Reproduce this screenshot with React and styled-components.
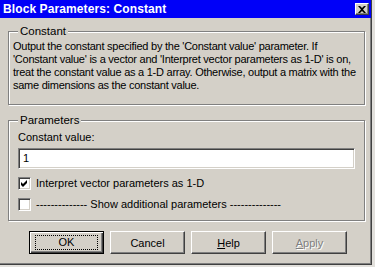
import React from "react";
import styled, { createGlobalStyle } from "styled-components";

const Global = createGlobalStyle`
  html, body {
    margin: 0;
    padding: 0;
    background: #e2e0dc;
  }
  body {
    font-family: "Liberation Sans", Arial, sans-serif;
    font-size: 11px;
    color: #000;
  }
`;

const Window = styled.div`
  width: 372px;
  height: 265px;
  box-sizing: border-box;
  background: #d4d0c8;
  border-right: 1px solid #404040;
  border-bottom: 1px solid #404040;
  box-shadow: inset -1px -1px 0 #808080;
  display: flex;
  flex-direction: column;
`;

const TitleBar = styled.div`
  height: 18px;
  background: #0000f8;
  display: flex;
  align-items: center;
  justify-content: space-between;
  padding: 0 2px 0 3px;
  box-sizing: border-box;
`;

const Title = styled.span`
  color: #fff;
  font-weight: bold;
  font-size: 12px;
  letter-spacing: 0.1px;
`;

const CloseButton = styled.div`
  width: 14px;
  height: 12px;
  box-sizing: border-box;
  background: #d4d0c8;
  border-top: 1px solid #fff;
  border-left: 1px solid #fff;
  border-right: 1px solid #404040;
  border-bottom: 1px solid #404040;
  box-shadow: inset -1px -1px 0 #808080;
  display: flex;
  align-items: center;
  justify-content: center;
`;

const Body = styled.div`
  padding: 7px 6px 0 8px;
  display: flex;
  flex-direction: column;
  gap: 9px;
`;

const Group = styled.fieldset`
  margin: 0;
  height: ${(p) => p.$h}px;
  box-sizing: border-box;
  border: 1px solid #808080;
  box-shadow: inset 1px 1px 0 #fff, 1px 1px 0 #fff;
  padding: 0 6px 0 4px;
  width: 357px;
`;

const Legend = styled.legend`
  padding: 0 2px;
  margin-left: 5px;
  background: #d4d0c8;
  line-height: 13px;
  font-size: 11.5px;
`;

const Description = styled.p`
  margin: 2px 0 0 0;
  line-height: 13px;
  letter-spacing: -0.25px;
`;

const Label = styled.div`
  margin: 4px 0 0 5px;
  line-height: 13px;
`;

const TextField = styled.div`
  margin: 4px 0 0 5px;
  width: 337px;
  height: 21px;
  box-sizing: border-box;
  background: #fff;
  border-top: 1px solid #808080;
  border-left: 1px solid #808080;
  border-right: 1px solid #fff;
  border-bottom: 1px solid #fff;
  box-shadow: inset 1px 1px 0 #404040, inset -1px -1px 0 #d4d0c8;
  padding: 3px 0 0 4px;
  line-height: 13px;
`;

const CheckRow = styled.div`
  display: flex;
  align-items: center;
  gap: 5px;
  margin: ${(p) => p.$top}px 0 0 5px;
  height: 13px;
  line-height: 13px;
`;

const Box = styled.div`
  width: 13px;
  height: 13px;
  box-sizing: border-box;
  background: #fff;
  border-top: 1px solid #808080;
  border-left: 1px solid #808080;
  border-right: 1px solid #fff;
  border-bottom: 1px solid #fff;
  box-shadow: inset 1px 1px 0 #404040, inset -1px -1px 0 #d4d0c8;
  display: flex;
  align-items: center;
  justify-content: center;
`;

const ButtonRow = styled.div`
  display: flex;
  gap: 6px;
  padding: 10px 0 0 29px;
`;

const Button = styled.div`
  width: 75px;
  height: 23px;
  box-sizing: border-box;
  background: #d4d0c8;
  border-top: 1px solid #fff;
  border-left: 1px solid #fff;
  border-right: 1px solid #404040;
  border-bottom: 1px solid #404040;
  box-shadow: inset -1px -1px 0 #808080;
  display: flex;
  align-items: center;
  justify-content: center;
  color: ${(p) => (p.$disabled ? "#808080" : "#000")};
  text-shadow: ${(p) => (p.$disabled ? "1px 1px 0 #fff" : "none")};

  &.default {
    border: 1px solid #000;
    box-shadow: inset 1px 1px 0 #fff, inset -1px -1px 0 #404040,
      inset -2px -2px 0 #808080;
  }
`;

const Focus = styled.span`
  border: 1px dotted #000;
  width: 61px;
  height: 13px;
  display: flex;
  align-items: center;
  justify-content: center;
  line-height: 13px;
`;

const Mnemonic = styled.span`
  text-decoration: underline;
`;

const Check = () => (
  <svg width="7" height="7" viewBox="0 0 7 7">
    <path d="M0 2 L2 4 L6 0 L6 3 L2 7 L0 5 Z" fill="#000" />
  </svg>
);

const Cross = () => (
  <svg width="8" height="7" viewBox="0 0 8 7">
    <path
      d="M0 0h2l2 2 2-2h2L5 3.5 8 7H6L4 5 2 7H0l3-3.5z"
      fill="#000"
    />
  </svg>
);

export default function App() {
  return (
    <>
      <Global />
      <Window>
        <TitleBar>
          <Title>Block Parameters: Constant</Title>
          <CloseButton>
            <Cross />
          </CloseButton>
        </TitleBar>
        <Body>
          <Group $h={80}>
            <Legend>Constant</Legend>
            <Description>
              Output the constant specified by the 'Constant value' parameter. If
              <br />
              'Constant value' is a vector and 'Interpret vector parameters as 1-D' is on,
              <br />
              treat the constant value as a 1-D array. Otherwise, output a matrix with the
              <br />
              same dimensions as the constant value.
            </Description>
          </Group>
          <Group $h={107}>
            <Legend>Parameters</Legend>
            <Label>Constant value:</Label>
            <TextField>1</TextField>
            <CheckRow $top={8}>
              <Box>
                <Check />
              </Box>
              <span>Interpret vector parameters as 1-D</span>
            </CheckRow>
            <CheckRow $top={8}>
              <Box />
              <span>-------------- Show additional parameters --------------</span>
            </CheckRow>
          </Group>
        </Body>
        <ButtonRow>
          <Button className="default">
            <Focus>OK</Focus>
          </Button>
          <Button>Cancel</Button>
          <Button>
            <span>
              <Mnemonic>H</Mnemonic>elp
            </span>
          </Button>
          <Button $disabled>
            <span>
              <Mnemonic>A</Mnemonic>pply
            </span>
          </Button>
        </ButtonRow>
      </Window>
    </>
  );
}
